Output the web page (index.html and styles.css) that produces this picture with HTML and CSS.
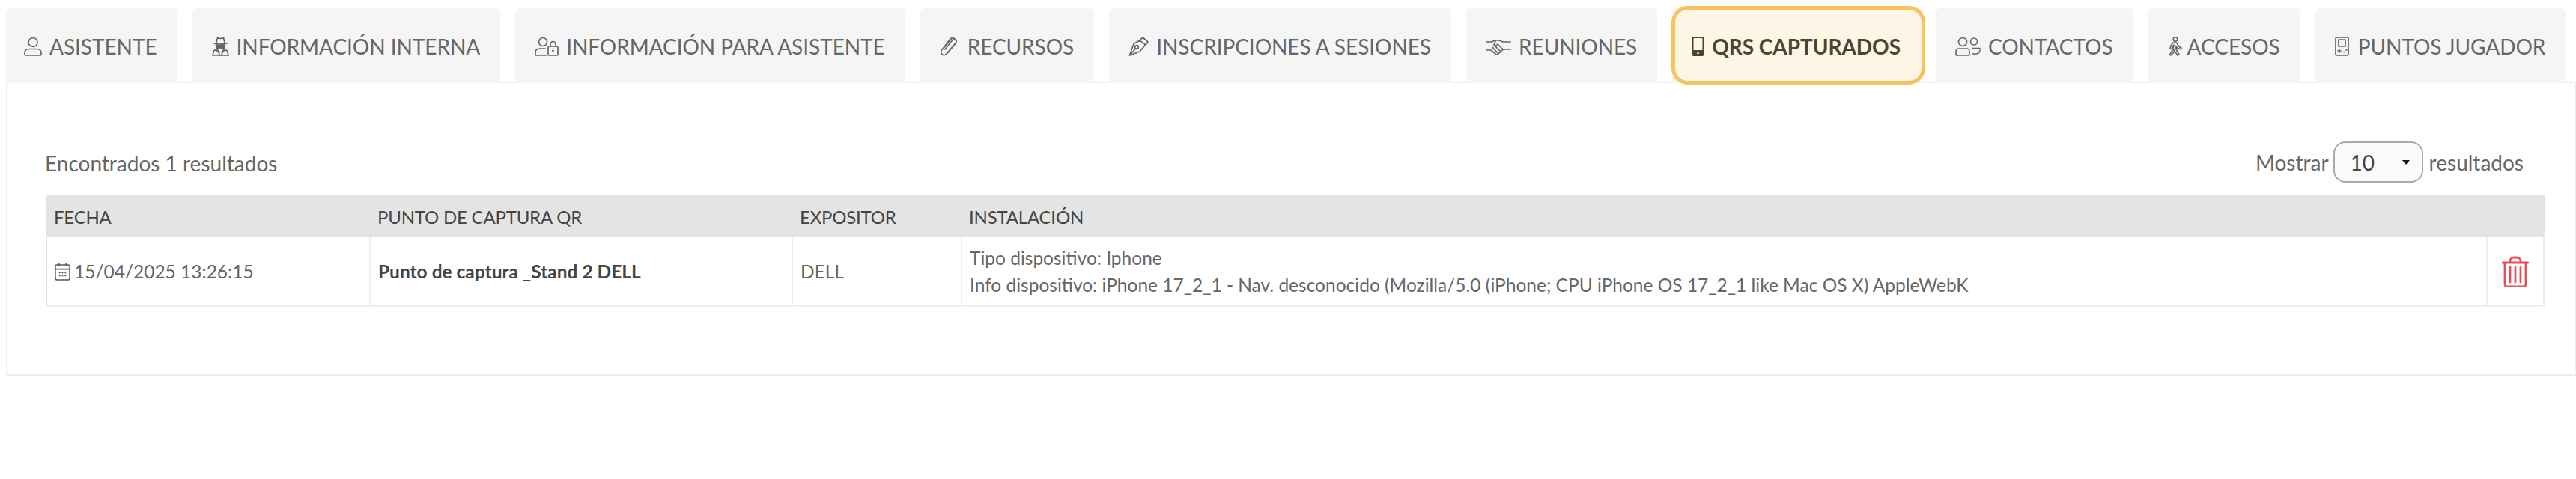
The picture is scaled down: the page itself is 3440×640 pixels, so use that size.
FILE: index.html
```html
<!DOCTYPE html>
<html lang="es">
<head>
<meta charset="utf-8">
<title>QRs capturados</title>
<link rel="stylesheet" href="styles.css">
</head>
<body>
<nav class="tabs">
  <a class="tab"><svg class="ico ico-user" viewBox="0 0 24 26"><circle cx="12" cy="7.500" r="6"/><path d="M6 16.500h12a5 5 0 0 1 5 5v2a1.500 1.500 0 0 1-1.500 1.500h-19A1.500 1.500 0 0 1 1 23.500v-2a5 5 0 0 1 5-5z"/></svg><span>ASISTENTE</span></a>
  <a class="tab"><svg class="ico ico-spy" viewBox="0 0 23 26"><path d="M6 8l1.500-6.500q4 2 8 0L17 8M1.500 8.500q10 3 20 0"/><path class="shade" d="M5.500 11h12l-.5 3q-.5 2-3 2-2 0-2.500-3-.5 3-2.500 3-2.500 0-3-2z"/><path d="M6 17l-3.500 2L1 25h21l-1.500-6-3.500-2M7 16l3.500 9M16 16l-3.500 9M6 18.500l4 2M17 18.500l-4 2"/></svg><span>INFORMACIÓN INTERNA</span></a>
  <a class="tab"><svg class="ico ico-lock" viewBox="0 0 32 26"><circle cx="11" cy="7" r="5.500"/><path d="M14 16H6a5 5 0 0 0-5 5v3a1 1 0 0 0 1 1h14"/><rect x="18" y="13" width="13" height="12" rx="1.500"/><path d="M21 13v-3a3.500 3.500 0 0 1 7 0v3"/><circle class="dot" cx="24.500" cy="19" r="1.400"/></svg><span>INFORMACIÓN PARA ASISTENTE</span></a>
  <a class="tab"><svg class="ico ico-clip" viewBox="0 0 24 26"><path d="M7 17L17 4.500a2.800 2.800 0 0 1 4.500 3.500L9 23a4 4 0 0 1-6.500-5L14 3a4.800 4.800 0 0 1 7.500 5.500L10.500 22"/><path d="M5 15.500L15.500 2.500"/></svg><span>RECURSOS</span></a>
  <a class="tab"><svg class="ico ico-pen" viewBox="0 0 27 26"><path d="M19 1l7 6-3 4-8-6zM15 5l-8 4.500L1.500 25l13.500-5 7.500-9M1.500 25l8-9"/><circle cx="11" cy="14" r="2.300"/></svg><span>INSCRIPCIONES A SESIONES</span></a>
  <a class="tab"><svg class="ico ico-hands" viewBox="0 0 34 26"><path d="M1 7h7l4-2h6l5 2h10M1 18h6l6 5q2 2 4 0l5-5 2-1h9M13 6l-2 5q2 2 5-1l7 7M9 14l7 8M13 13l6 6"/></svg><span>REUNIONES</span></a>
  <a class="tab tab-active"><svg class="ico ico-phone" viewBox="0 0 16 26"><rect x="1" y="1" width="14" height="24" rx="2"/><path class="fill" d="M1 19h14v4a2 2 0 0 1-2 2H3a2 2 0 0 1-2-2z"/><circle class="hole" cx="8" cy="22" r="1.300"/></svg><span>QRS CAPTURADOS</span></a>
  <a class="tab"><svg class="ico ico-users" viewBox="0 0 34 26"><circle cx="10" cy="7" r="5.500"/><circle cx="25" cy="6.500" r="4.500"/><path d="M5 16h10a4 4 0 0 1 4 4v4a1 1 0 0 1-1 1H2a1 1 0 0 1-1-1v-4a4 4 0 0 1 4-4zM23 15.500h10M23 23h5a5 5 0 0 0 5-5"/></svg><span>CONTACTOS</span></a>
  <a class="tab"><svg class="ico ico-walk" viewBox="0 0 19 26"><circle cx="10" cy="3.500" r="2.800"/><path d="M7 8h5l2 5 4 2-1 2-5-2-1-2v4l4 7-2 1-5-7-1-2 1-5-2 3v3l-3-1 1-4z"/><path d="M6 18l-2 4-2 2 2 1 3-3 1-2"/></svg><span>ACCESOS</span></a>
  <a class="tab"><svg class="ico ico-game" viewBox="0 0 19 26"><rect x="1" y="1" width="17" height="24" rx="2"/><rect x="5" y="4" width="9" height="9"/><path d="M4 19h4M6 17v4M11.500 20.500h1M15 18h1"/></svg><span>PUNTOS JUGADOR</span></a>
</nav>
<main class="panel">
  <div class="toolbar">
    <div class="count">Encontrados 1 resultados</div>
    <div class="pager">
      <span>Mostrar</span>
      <div class="select"><span>10</span><i class="caret"></i></div>
      <span class="after">resultados</span>
    </div>
  </div>
  <table class="grid">
    <colgroup>
      <col class="c1"><col class="c2"><col class="c3"><col class="c4"><col class="c5">
    </colgroup>
    <thead>
      <tr><th>FECHA</th><th>PUNTO DE CAPTURA QR</th><th>EXPOSITOR</th><th>INSTALACIÓN</th><th></th></tr>
    </thead>
    <tbody>
      <tr>
        <td><div class="date"><svg class="cal" viewBox="0 0 22 26"><rect x="1" y="4" width="20" height="21" rx="2"/><path d="M1 10h20M6 1v5M16 1v5"/><path class="dots" d="M6 14h2v2H6zM10 14h2v2h-2zM14 14h2v2h-2zM6 18h2v2H6zM10 18h2v2h-2zM14 18h2v2h-2z"/></svg><span>15/04/2025 13:26:15</span></div></td>
        <td class="strong">Punto de captura _Stand 2 DELL</td>
        <td>DELL</td>
        <td>Tipo dispositivo: Iphone<br>Info dispositivo: iPhone 17_2_1 - Nav. desconocido (Mozilla/5.0 (iPhone; CPU iPhone OS 17_2_1 like Mac OS X) AppleWebK</td>
        <td class="act"><svg class="trash" viewBox="0 0 36 42"><path d="M1 9h34M11 9V7a5 5 0 0 1 5-5h4a5 5 0 0 1 5 5v2M4 9v29a3 3 0 0 0 3 3h22a3 3 0 0 0 3-3V9M11 15v20M18 15v20M25 15v20"/></svg></td>
      </tr>
    </tbody>
  </table>
</main>
</body>
</html>
```
FILE: styles.css
```css
* { box-sizing: border-box; }
html, body { margin: 0; background: #fff; }
body { font-family: Lato, "Liberation Sans", sans-serif; color: #666; font-size: 24px; }

.tabs { display: flex; gap: 20px; padding: 11px 0 0 8px; position: relative; z-index: 1; margin-bottom: -2px; }
.tab { position: relative; isolation: isolate; display: flex; align-items: center; gap: 10px; height: 100px; padding: 1px 27px 0 26px; background: #f5f5f5; border-radius: 6px 6px 0 0; font-size: 28px; letter-spacing: -.05px; color: #666; white-space: nowrap; }
.tab-active { color: #4f4330; font-weight: 700; }
.tab-active::after { content: ""; position: absolute; z-index: -1; inset: -3px -6px -2px -1px; background: #fdf5e6; border: 5px solid #f7c35f; border-radius: 22px; }

.ico { width: 24px; height: 26px; flex: none; fill: none; stroke: currentColor; stroke-width: 1.700; stroke-linejoin: round; stroke-linecap: round; }
.ico-user { margin-left: -2px; }
.ico-spy { width: 23px; }
.ico-lock { width: 32px; }
.ico-clip { margin-right: 3px; }
.ico-pen { width: 27px; }
.ico-hands, .ico-users { width: 34px; }
.ico-phone { width: 17px; stroke-width: 2; }
.ico-walk { width: 19px; margin-right: -3px; }
.ico-game { width: 19px; margin-right: 2px; }
.ico .fill, .ico .shade { fill: currentColor; }
.ico .hole { fill: #fdf5e6; stroke: none; }
.ico .dot { fill: currentColor; stroke: none; }

.panel { border: 2px solid #eee; margin-left: 8px; height: 393px; padding: 78px 40px 0 51px; }
.toolbar { display: flex; justify-content: space-between; align-items: center; height: 55px; margin-bottom: 17px; font-size: 28px; }
.count { margin-left: -1px; padding-top: 3px; }
.pager { display: flex; align-items: center; gap: 6px; margin-right: 28px; }
.after { margin-left: 2px; }
.select { display: flex; align-items: center; justify-content: space-between; width: 120px; height: 55px; padding: 0 16px 0 21px; background: #fafafa; border: 2px solid #aaa; border-radius: 16px; color: #444; }
.caret { width: 0; height: 0; border: 6px solid transparent; border-top: 6px solid #111; border-bottom: 0; border-left-width: 5px; border-right-width: 5px; }

.grid { width: 3337px; border-collapse: separate; border-spacing: 0; table-layout: fixed; }
.c1 { width: 432px; }
.c2 { width: 564px; }
.c3 { width: 226px; }
.c4 { width: 2037px; }
.c5 { width: 78px; }
.grid th { height: 56px; padding: 0 11px; background: #e4e4e4; color: #444; font-size: 24px; font-weight: 400; text-align: left; letter-spacing: -.2px; }
.grid th:first-child { border-radius: 4px 0 0 0; }
.grid td { height: 93px; padding: 0 10px; border-left: 2px solid #eee; border-bottom: 2px solid #eee; font-size: 24.5px; line-height: 36px; vertical-align: middle; }
.grid td:first-child { border-left-color: #ddd; border-radius: 0 0 0 4px; }
.grid td:last-child { border-right: 2px solid #eee; }
.grid .strong { font-weight: 700; color: #444; }
.date { display: flex; align-items: center; gap: 5px; }
.cal { width: 21px; height: 25px; flex: none; fill: none; stroke: #555; stroke-width: 1.600; }
.cal .dots { fill: #555; stroke: none; }
.act { text-align: center; }
.trash { display: block; width: 36px; height: 42px; margin: 0 auto; fill: none; stroke: #e5505f; stroke-width: 2.800; stroke-linecap: round; stroke-linejoin: round; }
```
